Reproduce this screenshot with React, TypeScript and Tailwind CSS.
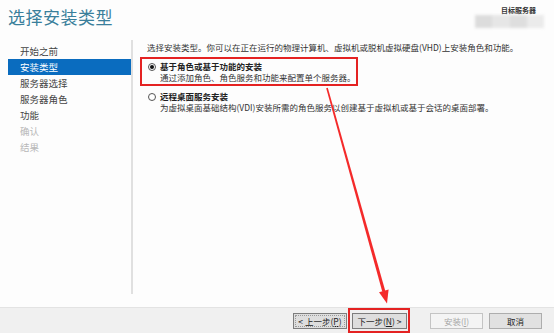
const STEPS = [
  { label: '开始之前', state: 'done' },
  { label: '安装类型', state: 'active' },
  { label: '服务器选择', state: 'done' },
  { label: '服务器角色', state: 'done' },
  { label: '功能', state: 'done' },
  { label: '确认', state: 'off' },
  { label: '结果', state: 'off' },
];

function Radio({ checked }: { checked?: boolean }) {
  return (
    <span className="w-[8px] h-[8px] rounded-full border border-[#555] bg-white flex items-center justify-center shrink-0">
      {checked && <span className="w-[4px] h-[4px] rounded-full bg-[#111]" />}
    </span>
  );
}

export default function App() {
  return (
    <div className="relative w-[554px] h-[333px] overflow-hidden bg-[#fdfdfd] flex flex-col font-['Noto_Sans_CJK_SC',sans-serif] text-[#333]">
      {/* Header */}
      <div className="h-10 flex justify-between shrink-0">
        <h1 className="pl-2 pt-[5px] text-[17px] leading-[24px] text-[#3a7f9b] tracking-[0.5px]">选择安装类型</h1>
        <div className="pr-[10px] pt-[6px] flex flex-col items-end">
          <span className="text-[7px] leading-[8px] font-bold text-[#333] mr-[8px]">目标服务器</span>
          <div className="mt-[1px] w-[69px] h-[13px] flex blur-[1.5px]">
            <div className="flex-1 bg-[#dcdcdc]" />
            <div className="flex-1 bg-[#e6e6e6]" />
            <div className="flex-1 bg-[#dedede]" />
            <div className="flex-1 bg-[#ebebeb]" />
          </div>
        </div>
      </div>

      {/* Body */}
      <div className="flex-1 flex pb-[13px]">
        <div className="w-[133px] border-r-2 border-[#e0e0e0] pt-[3px] shrink-0">
          <ul className="ml-2">
            {STEPS.map((s) => (
              <li
                key={s.label}
                className={
                  'h-4 pl-3 text-[9.5px] leading-4 ' +
                  (s.state === 'active'
                    ? 'bg-[#0a6cbf] text-white'
                    : s.state === 'off'
                      ? 'text-[#b8b8b8]'
                      : 'text-[#444]')
                }
              >
                {s.label}
              </li>
            ))}
          </ul>
        </div>

        <div className="flex-1 pl-[7px] pt-px text-[8.5px]">
          <p className="pl-[7px] leading-[12px] text-[#333]">
            选择安装类型。你可以在正在运行的物理计算机、虚拟机或脱机虚拟硬盘(VHD)上安装角色和功能。
          </p>

          <div className="mt-[4px] w-[218px] h-[29px] border-2 border-[#e42222] pl-[6px] pt-[2px]">
            <div className="flex items-center gap-[4px] leading-[11px]">
              <Radio checked />
              <span className="font-bold text-[#222]">基于角色或基于功能的安装</span>
            </div>
            <p className="pl-[12px] leading-[11px] text-[#333]">通过添加角色、角色服务和功能来配置单个服务器。</p>
          </div>

          <div className="mt-[5px] pl-[8px]">
            <div className="flex items-center gap-[4px] leading-[11px]">
              <Radio />
              <span className="font-bold text-[#222]">远程桌面服务安装</span>
            </div>
            <p className="pl-[12px] leading-[11px] text-[#333]">
              为虚拟桌面基础结构(VDI)安装所需的角色服务以创建基于虚拟机或基于会话的桌面部署。
            </p>
          </div>
        </div>
      </div>

      {/* Footer */}
      <div className="h-[26px] shrink-0 bg-[#f0f0f0] border-t border-[#e3e3e3] flex items-center justify-end pr-[12px] text-[8.5px]">
        <button className="w-[54px] h-4 bg-[#dedede] border border-[#7d7d7d] outline outline-1 outline-dotted outline-offset-[-3px] outline-[#999] text-[#222] leading-[14px]">
          &lt; 上一步(<span className="underline">P</span>)
        </button>
        <div className="ml-px w-[62px] h-[25px] border-2 border-[#e42222] flex items-center pl-[2px]">
          <button className="w-[55px] h-4 bg-[#dedede] border border-[#7d7d7d] text-[#222] leading-[14px]">
            下一步(<span className="underline">N</span>) &gt;
          </button>
        </div>
        <button className="ml-[20px] w-[53px] h-4 bg-[#f4f4f4] border border-[#c4c4c4] text-[#a6a6a6] leading-[14px]">
          安装(<span className="underline">I</span>)
        </button>
        <button className="ml-[6px] w-[53px] h-4 bg-[#e1e1e1] border border-[#adadad] text-[#222] leading-[14px]">
          取消
        </button>
      </div>

      {/* Annotation arrow */}
      <svg className="absolute inset-0 pointer-events-none" width="554" height="333" viewBox="0 0 554 333">
        <polygon
          points="326.2,88.2 327.8,87.8 385.3,291 382.3,291.8"
          fill="#f42a2a"
        />
        <polygon points="388.6,289.6 379,292.3 387,303.5" fill="#f42a2a" />
      </svg>
    </div>
  );
}
